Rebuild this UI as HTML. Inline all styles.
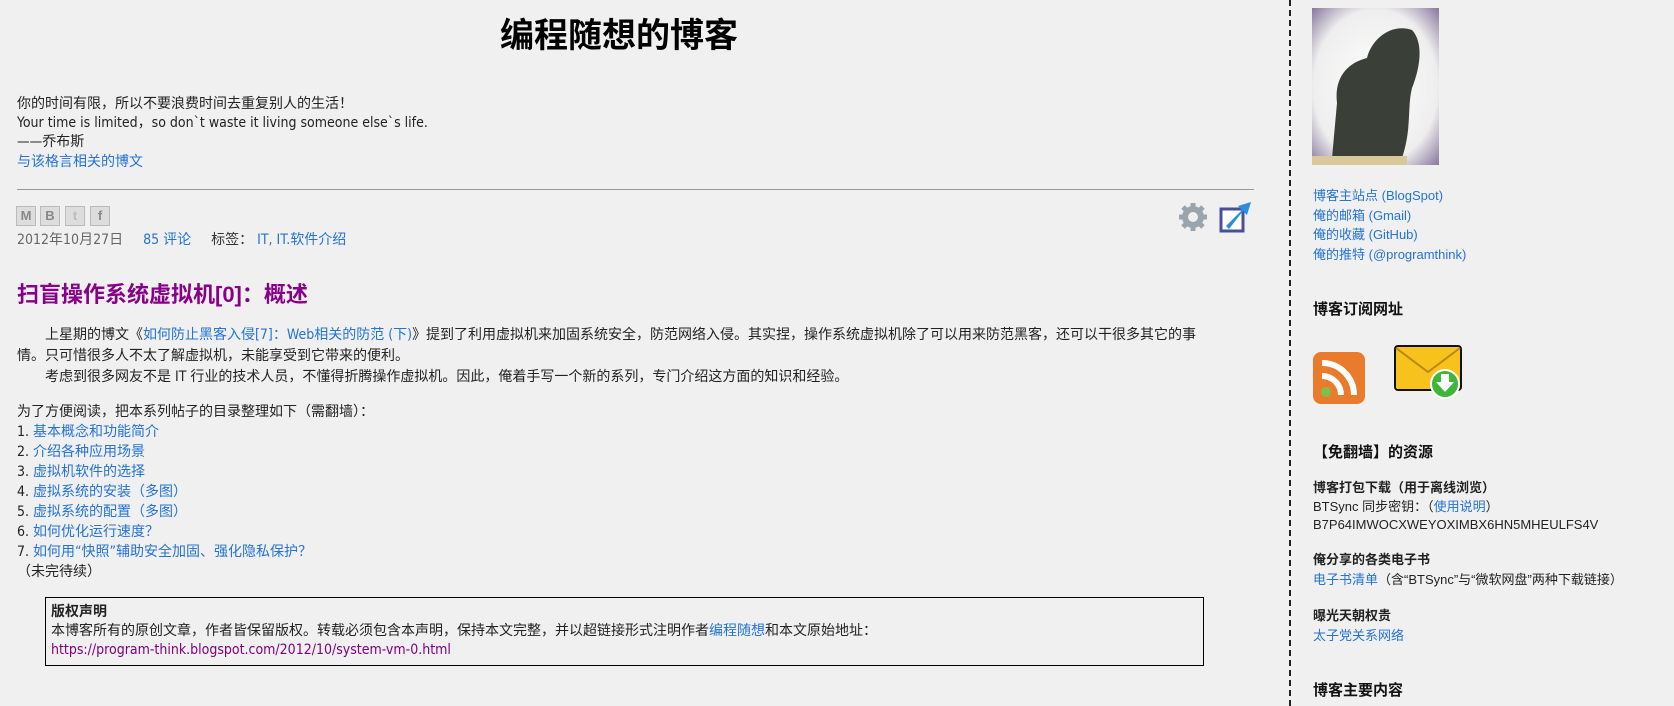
<!DOCTYPE html>
<html><head><meta charset="utf-8"><style>
body{margin:0;width:1674px;height:706px;background:#f0f0f0;font-family:"Liberation Sans","Noto Sans CJK SC",sans-serif;font-size:13px;color:#222;position:relative;overflow:hidden}
.m{font-family:"DejaVu Sans Condensed","Liberation Sans","Noto Sans CJK SC",sans-serif;font-size:14px}
a{color:#2473d6;text-decoration:none}
.a{position:absolute;white-space:nowrap;line-height:19px}
h1{position:absolute;left:0;width:1238px;text-align:center;top:15px;margin:0;font-size:34px;font-weight:bold;color:#000;line-height:42px}
.b{font-weight:bold;color:#111}
.sh{position:absolute;top:206px;width:18px;height:18px;border:1px solid #bbb;background:#ddd;color:#888;font-size:13px;text-align:center;line-height:18px;font-weight:bold}
</style></head><body>
<h1>编程随想的博客</h1>
<div class="a m" style="left:17px;top:95px">你的时间有限，所以不要浪费时间去重复别人的生活！</div>
<div class="a m" style="left:17px;top:114px">Your time is limited，so don`t waste it living someone else`s life.</div>
<div class="a m" style="left:17px;top:133px">——乔布斯</div>
<div class="a m" style="left:17px;top:153px"><a>与该格言相关的博文</a></div>
<div style="position:absolute;left:17px;top:189px;width:1237px;height:1px;background:#999"></div>
<div class="sh" style="left:16px">M</div><div class="sh" style="left:40px">B</div><div class="sh" style="left:65px;color:#bbb">t</div><div class="sh" style="left:90px">f</div>
<svg style="position:absolute;left:1177px;top:201px" width="32" height="32" viewBox="0 0 32 32"><g fill="#9aa4ad"><circle cx="16" cy="16" r="11"/><g stroke="#9aa4ad" stroke-width="5"><line x1="16" y1="2" x2="16" y2="30"/><line x1="2" y1="16" x2="30" y2="16"/><line x1="6" y1="6" x2="26" y2="26"/><line x1="26" y1="6" x2="6" y2="26"/></g></g><circle cx="16" cy="16" r="5" fill="#f0f0f0"/></svg>
<svg style="position:absolute;left:1218px;top:200px" width="35" height="34" viewBox="0 0 35 34"><rect x="3" y="9" width="22" height="22" fill="#fff" stroke="#4a4f9a" stroke-width="3"/><path d="M8 26 L24 10 L20 6 L33 2 L29 15 L25 11 L11 29 Z" fill="#2a8ee0"/></svg>
<div class="a m" style="left:17px;top:231px;color:#666">2012年10月27日 &nbsp; &nbsp; <a>85 评论</a> &nbsp; &nbsp; <span style="color:#333">标签：</span> <a>IT</a>, <a>IT.软件介绍</a></div>
<div class="a" style="left:17px;top:281px;font-size:22px;font-weight:bold;color:#880088;line-height:28px">扫盲操作系统虚拟机[0]：概述</div>
<div class="a m" style="left:17px;top:325px;width:1200px;white-space:normal;line-height:21px">
<div style="text-indent:28px">上星期的博文《<a>如何防止黑客入侵[7]：Web相关的防范 (下)</a>》提到了利用虚拟机来加固系统安全，防范网络入侵。其实捏，操作系统虚拟机除了可以用来防范黑客，还可以干很多其它的事情。只可惜很多人不太了解虚拟机，未能享受到它带来的便利。</div>
<div style="text-indent:28px">考虑到很多网友不是 IT 行业的技术人员，不懂得折腾操作虚拟机。因此，俺着手写一个新的系列，专门介绍这方面的知识和经验。</div></div>
<div class="a m" style="left:17px;top:402px;line-height:20px">为了方便阅读，把本系列帖子的目录整理如下（需翻墙）：<br>1. <a>基本概念和功能简介</a><br>2. <a>介绍各种应用场景</a><br>3. <a>虚拟机软件的选择</a><br>4. <a>虚拟系统的安装（多图）</a><br>5. <a>虚拟系统的配置（多图）</a><br>6. <a>如何优化运行速度？</a><br>7. <a>如何用“快照”辅助安全加固、强化隐私保护？</a><br>（未完待续）</div>
<div style="position:absolute;left:45px;top:597px;width:1157px;height:67px;border:1px solid #000"></div>
<div class="a m" style="left:51px;top:603px;line-height:19px"><b>版权声明</b><br>本博客所有的原创文章，作者皆保留版权。转载必须包含本声明，保持本文完整，并以超链接形式注明作者<a>编程随想</a>和本文原始地址：<br><a style="color:#800080">https://program-think.blogspot.com/2012/10/system-vm-0.html</a></div>
<div style="position:absolute;left:1289px;top:0;width:0;height:706px;border-left:2px dashed #222"></div>
<svg style="position:absolute;left:1312px;top:8px" width="127" height="157"><defs><radialGradient id="g" cx="0.5" cy="0.5" r="0.7"><stop offset="0" stop-color="#fff"/><stop offset="0.7" stop-color="#eee"/><stop offset="1" stop-color="#8a7aa0"/></radialGradient></defs><rect width="127" height="157" fill="url(#g)"/><path d="M20 150 L25 95 C22 70 35 55 55 50 C60 30 80 15 100 22 C112 35 108 60 100 80 C95 100 100 120 90 150 Z" fill="#3a4038"/><rect x="0" y="148" width="95" height="9" fill="#d8c89a"/></svg>
<div class="a" style="left:1313px;top:186px;line-height:19.7px"><a>博客主站点 (BlogSpot)</a><br><a>俺的邮箱 (Gmail)</a><br><a>俺的收藏 (GitHub)</a><br><a>俺的推特 (@programthink)</a></div>
<div class="a b" style="left:1313px;top:299px;font-size:15px;line-height:22px">博客订阅网址</div>
<svg style="position:absolute;left:1312px;top:351px" width="54" height="54" viewBox="0 0 54 54"><rect x="1" y="1" width="52" height="52" rx="8" fill="#ea7a2c"/><circle cx="14" cy="41" r="5" fill="#7ec04a"/><path d="M10 25 A19 19 0 0 1 29 44" stroke="#fff" stroke-width="6" fill="none"/><path d="M10 12 A32 32 0 0 1 42 44" stroke="#fff" stroke-width="6" fill="none"/></svg>
<svg style="position:absolute;left:1393px;top:344px" width="72" height="56" viewBox="0 0 72 56"><rect x="2" y="2" width="66" height="44" rx="3" fill="#f8c21c" stroke="#111" stroke-width="2"/><path d="M3 4 L35 28 L67 4" stroke="#b88a10" stroke-width="2" fill="none"/><circle cx="52" cy="40" r="14" fill="#3fb53a" stroke="#fff" stroke-width="2"/><path d="M48 30 h8 v8 h5 l-9 10 l-9 -10 h5z" fill="#fff"/></svg>
<div class="a b" style="left:1313px;top:442px;font-size:15px;line-height:22px">【免翻墙】的资源</div>
<div class="a" style="left:1313px;top:479px;line-height:18.5px"><b>博客打包下载（用于离线浏览）</b><br>BTSync 同步密钥：（<a>使用说明</a>）<br>B7P64IMWOCXWEYOXIMBX6HN5MHEULFS4V</div>
<div class="a" style="left:1313px;top:550px;line-height:20px"><b>俺分享的各类电子书</b><br><a>电子书清单</a>（含“BTSync”与“微软网盘”两种下载链接）</div>
<div class="a" style="left:1313px;top:606px;line-height:20px"><b>曝光天朝权贵</b><br><a>太子党关系网络</a></div>
<div class="a b" style="left:1313px;top:680px;font-size:15px;line-height:22px">博客主要内容</div>
</body></html>
